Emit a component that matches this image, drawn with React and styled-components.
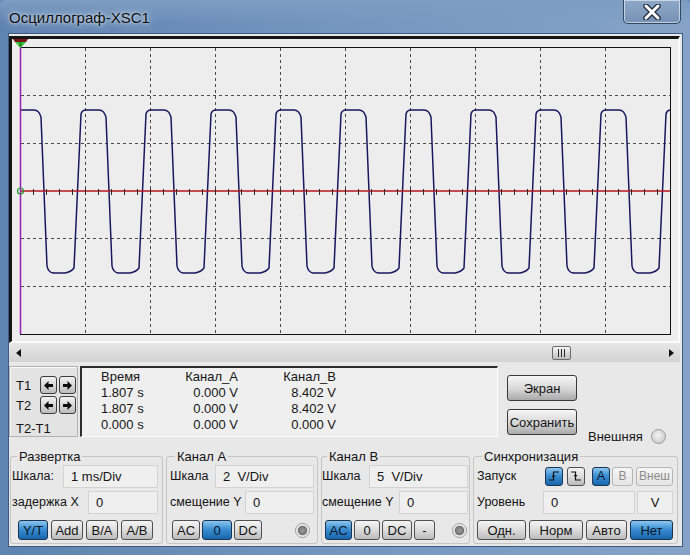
import React from "react";
import styled, { createGlobalStyle, css } from "styled-components";

const GlobalStyle = createGlobalStyle`
  html, body { margin: 0; padding: 0; background: #6c8db5; }
  body { font-family: "Liberation Sans", Arial, sans-serif; color: #141414; }
  * { box-sizing: border-box; }
`;

const readings = [
  ["Время", "Канал_А", "Канал_В"],
  ["1.807 s", "0.000 V", "8.402 V"],
  ["1.807 s", "0.000 V", "8.402 V"],
  ["0.000 s", "0.000 V", "0.000 V"],
];

// one period of the trace, R = x where the rising edge reaches the top
function wavePath() {
  let d = `M${82 - 65 * 2 - 8},268 `;
  for (let k = -2; k <= 10; k++) {
    const R = 82 + 65 * k;
    d += `L${R - 1},114 Q${R},110 ${R + 4},110 L${R + 17},110 Q${R + 22},110 ${R + 24},117 `;
    d += `L${R + 30},266 Q${R + 31},272 ${R + 36},273 L${R + 48},273 Q${R + 54},272 ${R + 57},268 `;
  }
  return d;
}

const vLines = Array.from({ length: 9 }, (_, i) => 20 + 65 * (i + 1));
const hLines = [1, 2, 4, 5].map((j) => 47 + 47.83 * j);
const ticks = Array.from({ length: 49 }, (_, i) => 20 + 13 * (i + 1));

export default function App() {
  return (
    <>
      <GlobalStyle />
      <Window>
        <TitleBar>
          <Title>Осциллограф-XSC1</Title>
          <CloseButton>
            <svg width="22" height="16" viewBox="0 0 22 16">
              <path d="M5 2 L17 14 M17 2 L5 14" stroke="#1f2c3e" strokeWidth="5.5" strokeLinecap="round" />
              <path d="M5 2 L17 14 M17 2 L5 14" stroke="#ffffff" strokeWidth="3" strokeLinecap="round" />
            </svg>
          </CloseButton>
        </TitleBar>

        <Client>
          <Screen>
            <svg width="666" height="302" viewBox="12 39 666 302">
              <defs>
                <clipPath id="plot">
                  <rect x="20" y="47" width="650" height="287" />
                </clipPath>
              </defs>
              <rect x="20.5" y="47.5" width="650" height="287" fill="none" stroke="#111" strokeWidth="1" />
              {vLines.map((x) => (
                <line key={x} x1={x + 0.5} y1="48" x2={x + 0.5} y2="334" stroke="#4a4a4a" strokeDasharray="3 3" />
              ))}
              {hLines.map((y) => (
                <line key={y} x1="21" y1={Math.round(y) + 0.5} x2="670" y2={Math.round(y) + 0.5} stroke="#4a4a4a" strokeDasharray="3 3" />
              ))}
              <path d={wavePath()} fill="none" stroke="#17175e" strokeWidth="1.5" clipPath="url(#plot)" />
              <line x1="20" y1="191" x2="670" y2="191" stroke="#b8141c" strokeWidth="1.6" />
              {ticks.map((x) => (
                <line key={x} x1={x + 0.5} y1="189" x2={x + 0.5} y2="195" stroke="#2a2a2a" strokeWidth="1" />
              ))}
              <line x1="20.5" y1="40" x2="20.5" y2="334" stroke="#9a1fb8" strokeWidth="1.5" />
              <circle cx="20.5" cy="191" r="3" fill="none" stroke="#1f9a2a" strokeWidth="1.2" />
              <polygon points="13,39 28,39 26,42 15,42" fill="#7a1418" />
              <polygon points="15,42 26,42 20.5,48" fill="#32c13c" />
              <text x="20.5" y="46" fontSize="6" textAnchor="middle" fill="#0a3a0a" fontFamily="Liberation Sans, sans-serif">1</text>
            </svg>
          </Screen>

          <ScrollBar>
            <ScrollArrow>
              <svg width="6" height="8" viewBox="0 0 6 8"><polygon points="5,0 5,8 0,4" fill="#111" /></svg>
            </ScrollArrow>
            <Track>
              <Thumb $pos={524}>
                <Grip />
                <Grip />
                <Grip />
              </Thumb>
            </Track>
            <ScrollArrow>
              <svg width="6" height="8" viewBox="0 0 6 8"><polygon points="1,0 1,8 6,4" fill="#111" /></svg>
            </ScrollArrow>
          </ScrollBar>

          <InfoRow>
            <CursorBox>
              <CursorRow>
                <CursorLabel>T1</CursorLabel>
                <ArrowButton><ArrowIcon dir="left" /></ArrowButton>
                <ArrowButton><ArrowIcon dir="right" /></ArrowButton>
              </CursorRow>
              <CursorRow>
                <CursorLabel>T2</CursorLabel>
                <ArrowButton><ArrowIcon dir="left" /></ArrowButton>
                <ArrowButton><ArrowIcon dir="right" /></ArrowButton>
              </CursorRow>
              <DiffLabel>T2-T1</DiffLabel>
            </CursorBox>

            <Readout>
              {readings.map((row, r) =>
                row.map((cell, c) => (
                  <Cell key={`${r}-${c}`} $align={c === 0 ? "left" : "right"}>
                    {cell}
                  </Cell>
                ))
              )}
            </Readout>

            <ActionColumn>
              <ActionButton>Экран</ActionButton>
              <ActionButton>Сохранить</ActionButton>
            </ActionColumn>

            <External>
              Внешняя
              <Radio />
            </External>
          </InfoRow>

          <Groups>
            <Group $w={153} $pl={1} $pr={4}>
              <Legend>Развертка</Legend>
              <FieldRow>
                <Label>Шкала:</Label>
                <Field $w={95}>1 ms/Div</Field>
              </FieldRow>
              <FieldRow>
                <Label>задержка X</Label>
                <Field $w={70}>0</Field>
              </FieldRow>
              <ButtonRow $ml={6} $gap={3}>
                <Btn $w={30} $active>Y/T</Btn>
                <Btn $w={32}>Add</Btn>
                <Btn $w={32}>B/A</Btn>
                <Btn $w={32}>A/B</Btn>
              </ButtonRow>
            </Group>

            <Group $w={152} $pl={3} $pr={3}>
              <Legend>Канал A</Legend>
              <FieldRow>
                <Label>Шкала</Label>
                <Field $w={99}>2&nbsp;&nbsp;V/Div</Field>
              </FieldRow>
              <FieldRow>
                <Label>смещение Y</Label>
                <Field $w={69}>0</Field>
              </FieldRow>
              <ButtonRow $ml={2} $gap={2}>
                <Btn $w={28}>AC</Btn>
                <Btn $w={30} $active>0</Btn>
                <Btn $w={28}>DC</Btn>
                <Led $mr={4} />
              </ButtonRow>
            </Group>

            <Group $w={149} $pl={0} $pr={1}>
              <Legend>Канал B</Legend>
              <FieldRow>
                <Label>Шкала</Label>
                <Field $w={99}>5&nbsp;&nbsp;V/Div</Field>
              </FieldRow>
              <FieldRow>
                <Label>смещение Y</Label>
                <Field $w={69}>0</Field>
              </FieldRow>
              <ButtonRow $ml={3} $gap={2}>
                <Btn $w={27} $active>AC</Btn>
                <Btn $w={26}>0</Btn>
                <Btn $w={30}>DC</Btn>
                <Btn $w={21}>-</Btn>
                <Led $mr={1} />
              </ButtonRow>
            </Group>

            <Group $w={205} $pl={3} $pr={4}>
              <Legend>Синхронизация</Legend>
              <FieldRow>
                <Label>Запуск</Label>
                <TriggerButtons>
                  <SmallBtn $w={18} $active>
                    <EdgeIcon rising />
                  </SmallBtn>
                  <SmallBtn $w={18} $ml={4}>
                    <EdgeIcon />
                  </SmallBtn>
                  <SmallBtn $w={18} $ml={7} $active>A</SmallBtn>
                  <SmallBtn $w={21} $ml={2} $disabled>B</SmallBtn>
                  <SmallBtn $w={37} $ml={3} $disabled>Внеш</SmallBtn>
                </TriggerButtons>
              </FieldRow>
              <FieldRow>
                <Label>Уровень</Label>
                <Field $w={92}>0</Field>
                <Field $w={36} $ml={2} $center>V</Field>
              </FieldRow>
              <ButtonRow $ml={0} $gap={3} $spread>
                <Btn $w={49}>Одн.</Btn>
                <Btn $w={54}>Норм</Btn>
                <Btn $w={41}>Авто</Btn>
                <Btn $w={43} $active>Нет</Btn>
              </ButtonRow>
            </Group>
          </Groups>
        </Client>
      </Window>
    </>
  );
}

function ArrowIcon({ dir }) {
  const pts = dir === "left"
    ? "1,5.5 5.5,1 5.5,4 10,4 10,7 5.5,7 5.5,10"
    : "10,5.5 5.5,1 5.5,4 1,4 1,7 5.5,7 5.5,10";
  return (
    <svg width="11" height="11" viewBox="0 0 11 11">
      <polygon points={pts} fill="#0c0c0c" />
    </svg>
  );
}

function EdgeIcon({ rising }) {
  return (
    <svg width="12" height="12" viewBox="0 0 12 12">
      <path d={rising ? "M1 10 H5.5 V2 H11" : "M1 2 H5.5 V10 H11"} fill="none" stroke="#101010" strokeWidth="1.2" />
      <polygon points={rising ? "3.5,7 5.5,4.5 7.5,7" : "3.5,5 5.5,7.5 7.5,5"} fill="#101010" />
    </svg>
  );
}

const Window = styled.div`
  width: 690px;
  height: 555px;
  display: flex;
  flex-direction: column;
  border-radius: 6px 6px 0 0;
  overflow: hidden;
  background: linear-gradient(90deg, #5f83b0 0%, #7295be 45%, #86a3c7 100%);
`;

const TitleBar = styled.div`
  height: 33px;
  display: flex;
  align-items: flex-start;
  padding-left: 9px;
  background: linear-gradient(#7e9dc3 0%, rgba(120, 150, 190, 0) 70%);
`;

const Title = styled.div`
  padding-top: 9px;
  font-size: 15px;
  line-height: 18px;
  color: #0e0e0e;
  text-shadow: 0 0 8px rgba(235, 242, 250, 0.95), 0 0 3px rgba(235, 242, 250, 0.85);
`;

const CloseButton = styled.div`
  margin-left: auto;
  margin-right: 9px;
  width: 58px;
  height: 24px;
  display: flex;
  align-items: center;
  justify-content: center;
  border: 1px solid #33465f;
  border-top: none;
  border-radius: 0 0 5px 5px;
  background: linear-gradient(#8ea8c8, #7691b5);
  box-shadow: inset 0 0 0 1px rgba(220, 230, 242, 0.75);
`;

const Client = styled.div`
  flex: 1;
  margin: 0 7px 8px 8px;
  background: #e8e8e8;
  border: 1px solid #3e5a80;
  display: flex;
  flex-direction: column;
`;

const Screen = styled.div`
  margin: 2px 2px 0 0;
  height: 307px;
  display: flex;
  background: #ededed;
  border-top: 3px solid #151515;
  border-left: 3px solid #151515;
  border-right: 2px solid #fbfbfb;
  border-bottom: 2px solid #fbfbfb;
`;

const ScrollBar = styled.div`
  margin: 1px 2px 0 0;
  height: 18px;
  display: flex;
  align-items: center;
  background: linear-gradient(#e6e6e6, #d3d3d3);
`;

const ScrollArrow = styled.div`
  width: 19px;
  height: 18px;
  display: flex;
  align-items: center;
  justify-content: center;
`;

const Track = styled.div`
  flex: 1;
  height: 18px;
  display: flex;
  align-items: center;
`;

const Thumb = styled.div`
  margin-left: ${(p) => p.$pos}px;
  width: 19px;
  height: 14px;
  display: flex;
  align-items: center;
  justify-content: center;
  gap: 2px;
  border: 1px solid #6b6b6b;
  border-radius: 2px;
  background: linear-gradient(#f6f6f6, #bdbdbd);
`;

const Grip = styled.span`
  width: 1px;
  height: 8px;
  background: #2a2a2a;
`;

const InfoRow = styled.div`
  display: flex;
  margin-top: 4px;
  height: 71px;
`;

const CursorBox = styled.div`
  width: 69px;
  padding: 9px 0 0 6px;
  display: flex;
  flex-direction: column;
  gap: 2px;
  background: #e3e3e3;
  border: 1px solid #b3b3b3;
  box-shadow: inset 1px 1px 0 #fafafa;
`;

const CursorRow = styled.div`
  display: flex;
  align-items: center;
  height: 18px;
  gap: 2px;
`;

const CursorLabel = styled.div`
  width: 22px;
  font-size: 13px;
`;

const DiffLabel = styled.div`
  margin-top: 5px;
  font-size: 13px;
`;

const ArrowButton = styled.div`
  width: 17px;
  height: 18px;
  display: flex;
  align-items: center;
  justify-content: center;
  border: 1px solid #3d3d3d;
  border-radius: 3px;
  background: linear-gradient(#f2f2f2, #bdbdbd);
`;

const Readout = styled.div`
  width: 418px;
  margin-left: 2px;
  padding: 1px 0 0 19px;
  display: grid;
  grid-template-columns: 42px 95px 98px;
  grid-auto-rows: 16px;
  align-content: start;
  background: #efefef;
  border-top: 2px solid #2c2c2c;
  border-left: 2px solid #2c2c2c;
  border-right: 1px solid #fdfdfd;
  border-bottom: 1px solid #fdfdfd;
`;

const Cell = styled.div`
  font-size: 13px;
  line-height: 16px;
  white-space: nowrap;
  text-align: ${(p) => p.$align};
  color: #161616;
`;

const ActionColumn = styled.div`
  margin-left: 9px;
  width: 70px;
  padding-top: 9px;
  display: flex;
  flex-direction: column;
  gap: 8px;
`;

const buttonFace = css`
  display: flex;
  align-items: center;
  justify-content: center;
  font-size: 13px;
  color: #141414;
  white-space: nowrap;
  border: 1px solid #505050;
  border-radius: 3px;
  background: linear-gradient(#f4f4f4 0%, #dcdcdc 50%, #bbbbbb 100%);
`;

const ActionButton = styled.div`
  ${buttonFace};
  height: 26px;
  border-color: #3a3a3a;
  background: linear-gradient(#f7f7f7 0%, #d6d6d6 55%, #a9a9a9 100%);
`;

const External = styled.div`
  align-self: flex-end;
  margin: 0 0 -7px 11px;
  display: flex;
  align-items: center;
  gap: 8px;
  font-size: 13px;
`;

const Radio = styled.div`
  width: 15px;
  height: 15px;
  border-radius: 50%;
  border: 1px solid #9b9b9b;
  background: radial-gradient(circle at 45% 40%, #f2f2f2 0%, #d6d6d6 60%, #c2c2c2 100%);
`;

const Groups = styled.div`
  display: flex;
  gap: 3px;
  margin: 12px 0 0 1px;
  height: 95px;
`;

const Group = styled.fieldset`
  margin: 0;
  min-width: 0;
  width: ${(p) => p.$w}px;
  padding: 0 ${(p) => p.$pr}px 0 ${(p) => p.$pl}px;
  border: 1px solid #c5c5c5;
  border-radius: 3px;
  display: flex;
  flex-direction: column;
  gap: 2px;
`;

const Legend = styled.legend`
  margin-left: 5px;
  padding: 0 2px;
  font-size: 13px;
  line-height: 15px;
  color: #121212;
`;

const FieldRow = styled.div`
  display: flex;
  align-items: center;
  height: 24px;
`;

const Label = styled.div`
  font-size: 12.5px;
  white-space: nowrap;
  color: #131313;
`;

const Field = styled.div`
  width: ${(p) => p.$w}px;
  height: 23px;
  margin-left: ${(p) => (p.$ml !== undefined ? `${p.$ml}px` : "auto")};
  padding-left: ${(p) => (p.$center ? 0 : 7)}px;
  display: flex;
  align-items: center;
  justify-content: ${(p) => (p.$center ? "center" : "flex-start")};
  font-size: 13px;
  color: #141414;
  background: #efefef;
  border: 1px solid #d3d3d3;
`;

const ButtonRow = styled.div`
  display: flex;
  align-items: center;
  gap: ${(p) => p.$gap}px;
  margin: 4px 0 0 ${(p) => p.$ml}px;
  justify-content: ${(p) => (p.$spread ? "space-between" : "flex-start")};
`;

const activeFace = css`
  color: #0b1626;
  border-color: #1a3452;
  background: linear-gradient(#8cc6ee 0%, #3b8fd2 45%, #1766ad 100%);
`;

const disabledFace = css`
  color: #8c8c8c;
  border-color: #b6b6b6;
  background: linear-gradient(#f5f5f5, #e4e4e4);
`;

const Btn = styled.div`
  ${buttonFace};
  width: ${(p) => p.$w}px;
  height: 20px;
  ${(p) => p.$active && activeFace};
  ${(p) => p.$disabled && disabledFace};
`;

const TriggerButtons = styled.div`
  margin-left: auto;
  display: flex;
  align-items: center;
`;

const SmallBtn = styled(Btn)`
  height: 19px;
  font-size: 12px;
  margin-left: ${(p) => p.$ml || 0}px;
`;

const Led = styled.div`
  margin-left: auto;
  margin-right: ${(p) => p.$mr}px;
  width: 15px;
  height: 15px;
  border-radius: 50%;
  border: 1px solid #9a9a9a;
  background: radial-gradient(circle at 50% 50%, #9a9a9a 0%, #7c7c7c 38%, #6f6f6f 46%, #e6e6e6 56%, #f7f7f7 80%);
`;
